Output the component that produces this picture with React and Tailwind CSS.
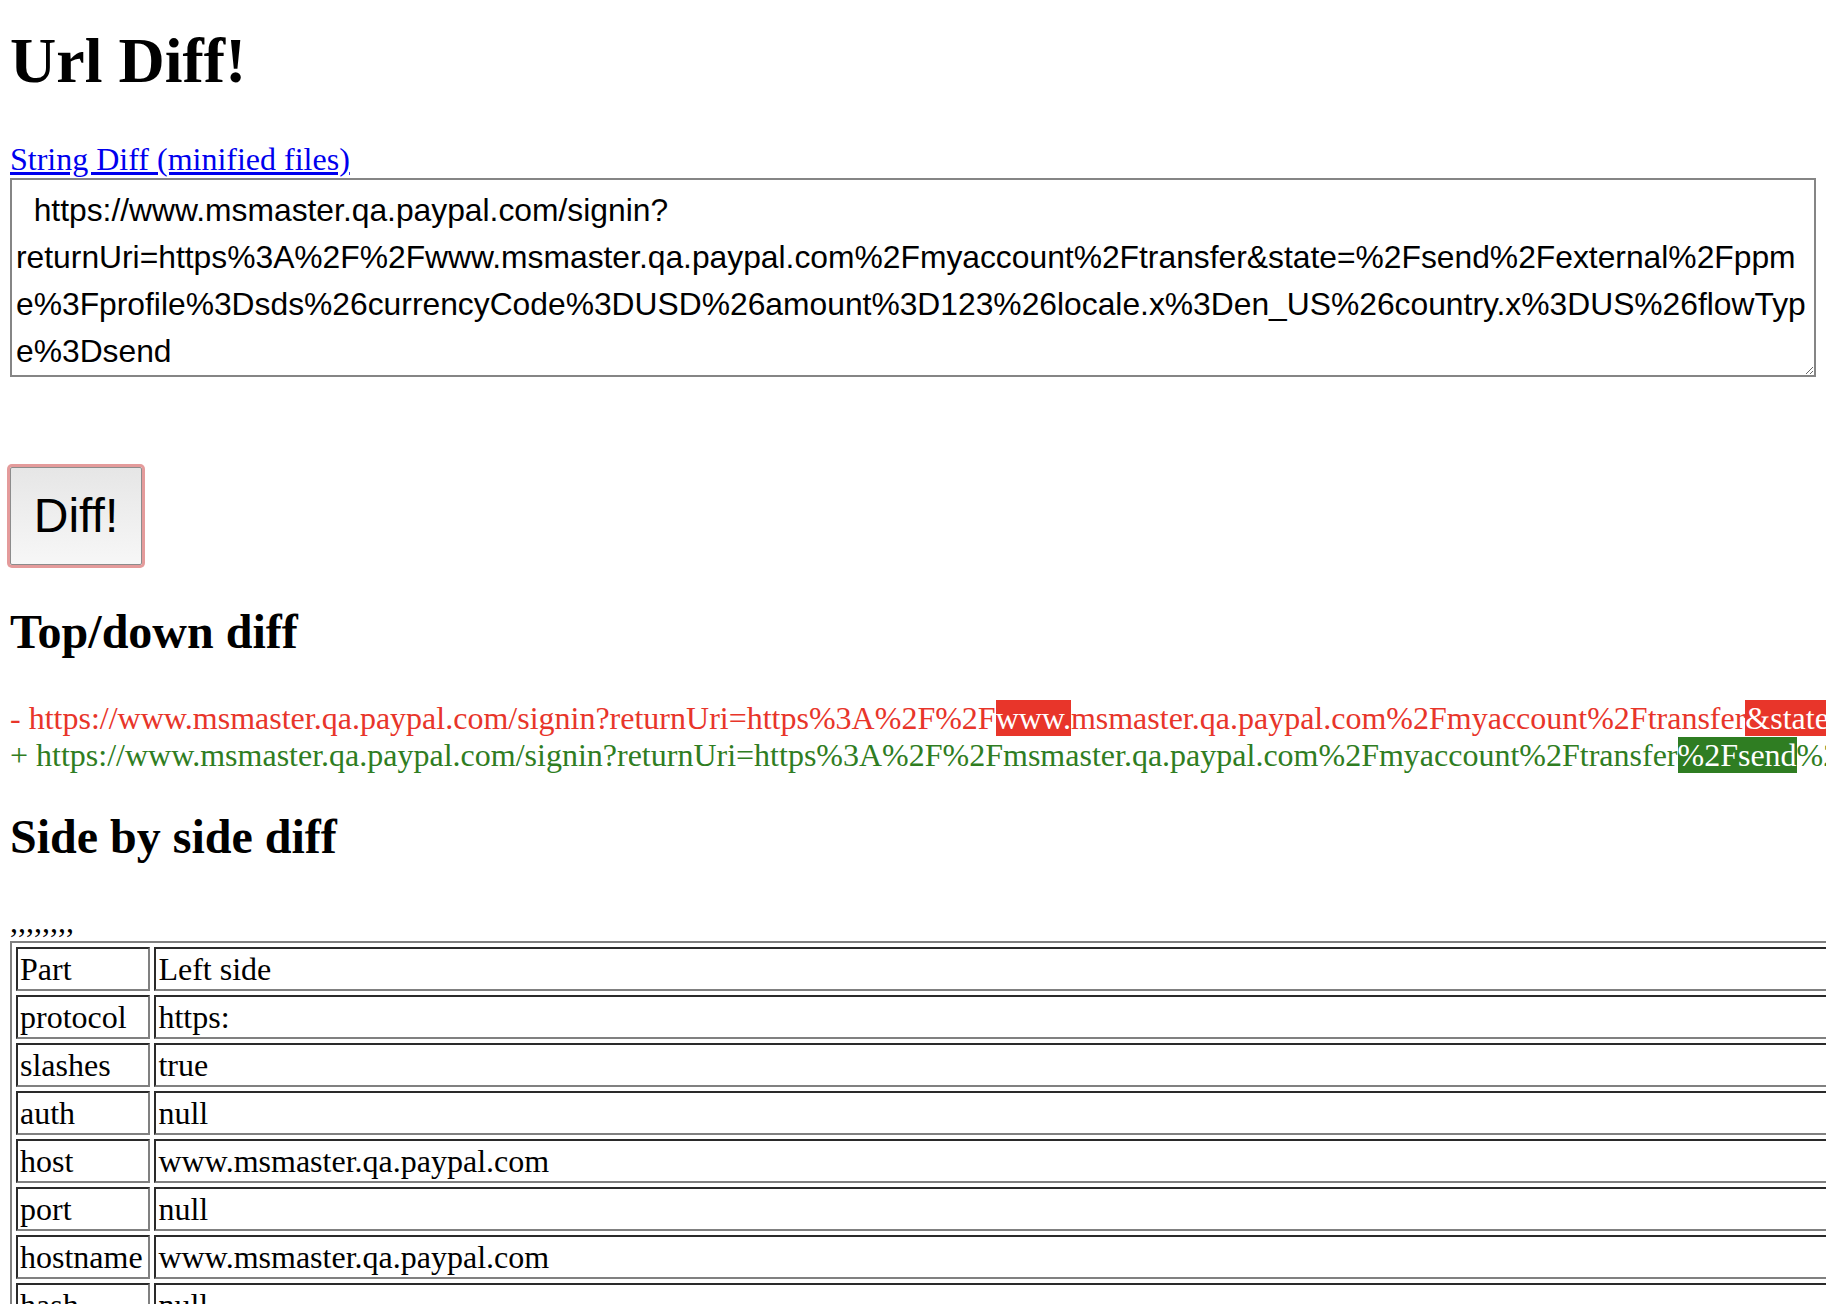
import React from 'react';

const leftUrl =
  'https://www.msmaster.qa.paypal.com/signin?returnUri=https%3A%2F%2Fwww.msmaster.qa.paypal.com%2Fmyaccount%2Ftransfer&state=%2Fsend%2Fexternal%2Fppme%3Fprofile%3Dsds%26currencyCode%3DUSD%26amount%3D123%26locale.x%3Den_US%26country.x%3DUS%26flowType%3Dsend';

const leftSearch = leftUrl.slice(leftUrl.indexOf('?'));
const rightSearch =
  '?returnUri=https%3A%2F%2Fmsmaster.qa.paypal.com%2Fmyaccount%2Ftransfer%2Fsend%2Fexternal%2Fppme%3Fprofile%3Dsds%26currencyCode%3DUSD%26amount%3D123%26locale.x%3Den_US%26country.x%3DUS%26flowType%3Dsend';

const rows = [
  ['Part', 'Left side', 'Right side'],
  ['protocol', 'https:', 'https:'],
  ['slashes', 'true', 'true'],
  ['auth', 'null', 'null'],
  ['host', 'www.msmaster.qa.paypal.com', 'www.msmaster.qa.paypal.com'],
  ['port', 'null', 'null'],
  ['hostname', 'www.msmaster.qa.paypal.com', 'www.msmaster.qa.paypal.com'],
  ['hash', 'null', 'null'],
  ['search', leftSearch, rightSearch],
  ['query', leftSearch.slice(1), rightSearch.slice(1)],
  ['pathname', '/signin', '/signin'],
];

const cell =
  'border-2 border-t-[#2a2a2a] border-l-[#2a2a2a] border-r-[#808080] border-b-[#808080] p-[2px] whitespace-nowrap align-middle';

export default function App() {
  return (
    <div className="h-screen w-full overflow-hidden bg-white text-black font-['Liberation_Serif','Times_New_Roman',serif]">
      <div className="px-[10px] pt-[25px]">
        <h1 className="text-[64px] font-bold leading-[72px]">Url Diff!</h1>

        <a href="#" className="mt-[44px] block w-fit text-[32px] leading-[36px] text-[#0000ee] underline">
          String Diff (minified files)
        </a>

        <textarea
          spellCheck={false}
          defaultValue={'  ' + leftUrl}
          className="mt-[1px] block h-[199px] w-full overflow-hidden border-2 border-[#858585] pl-[4px] pr-[1px] pt-[7px] pb-0 text-[31.8px] leading-[47px] text-black outline-none font-['Liberation_Sans',Arial,sans-serif]"
        />

        <button className="mt-[90px] block h-[98px] w-[132px] rounded-[2px] border border-[#8c8c8c] bg-linear-to-b from-[#e6e6e6] to-[#f7f7f7] text-[48px] leading-none text-black shadow-[0_0_0_3px_#e49b9b] font-['Liberation_Sans',Arial,sans-serif]">
          Diff!
        </button>

        <h2 className="mt-[40px] text-[48px] font-bold leading-[54px]">Top/down diff</h2>

        <div className="mt-[41px] whitespace-nowrap text-[32px] leading-[36.5px]">
          <div className="text-[#e8352a]">
            - https://www.msmaster.qa.paypal.com/signin?returnUri=https%3A%2F%2F
            <span className="bg-[#e8352a] text-white">www.</span>
            msmaster.qa.paypal.com%2Fmyaccount%2Ftransfer
            <span className="bg-[#e8352a] text-white">&amp;state=</span>
            %2Fsend%2Fexternal%2Fppme%3Fprofile%3Dsds%26currencyCode%3DUSD%26amount%3D123
          </div>
          <div className="text-[#2f7d22]">
            + https://www.msmaster.qa.paypal.com/signin?returnUri=https%3A%2F%2Fmsmaster.qa.paypal.com%2Fmyaccount%2Ftransfer
            <span className="bg-[#2f7d22] text-white">%2Fsend</span>
            %2Fexternal%2Fppme%3Fprofile%3Dsds%26currencyCode%3DUSD%26amount%3D123
          </div>
        </div>

        <h2 className="mt-[37px] text-[48px] font-bold leading-[54px]">Side by side diff</h2>

        <div className="mt-[39px] text-[32px] leading-[36px]">,,,,,,,,</div>

        <table className="mt-[2px] border-separate border-spacing-[4px] border-2 border-t-[#808080] border-l-[#808080] border-b-[#2a2a2a] border-r-[#2a2a2a] text-[32px] leading-[36px]">
          <tbody>
            {rows.map((r) => (
              <tr key={r[0]}>
                <td className={cell + ' pr-[4px]'}>{r[0]}</td>
                <td className={cell}>{r[1]}</td>
                <td className={cell}>{r[2]}</td>
              </tr>
            ))}
          </tbody>
        </table>
      </div>
    </div>
  );
}
